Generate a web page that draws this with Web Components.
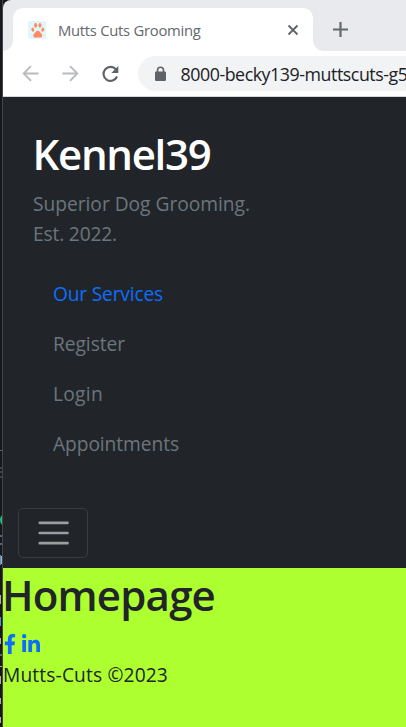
<!DOCTYPE html>
<html lang="en"><head><meta charset="utf-8"><title>Mutts Cuts Grooming</title>
<style>html,body{margin:0;height:727px;overflow:hidden;background:#17181b;font-family:"Open Sans","Noto Sans",sans-serif}</style></head>
<body><app-window></app-window>
<script>
const define=(name,html,ready)=>customElements.define(name,class extends HTMLElement{
  connectedCallback(){
    if(this.shadowRoot)return;
    const t=document.createElement('template');t.innerHTML=html;
    this.attachShadow({mode:'open'}).append(t.content.cloneNode(true));
    if(ready)ready(this);
  }
});
/* A line of text tracked to occupy the width given in its "w" attribute. */
define('tracked-text','<style>:host{display:block;width:max-content;white-space:pre}</style><span><slot></slot></span>',el=>{
  const n=el.textContent.length,w=el.getBoundingClientRect().width;
  el.style.letterSpacing=((+el.getAttribute('w')-w)/n)+'px';
});
define('paw-icon',`<style>:host{display:block;width:18px;height:20px}svg{display:block}</style>
<svg width="18" height="20" viewBox="0 0 18 20"><rect x="0" y="1" width="18" height="18" rx="2" fill="#e0f6fa"/><g fill="#ff8a5e"><ellipse cx="7.600" cy="5.300" rx="1.500" ry="2.400"/><ellipse cx="12" cy="5.300" rx="1.500" ry="2.400"/><ellipse cx="4.800" cy="9.700" rx="1.400" ry="2.100" transform="rotate(-15 4.800 9.700)"/><ellipse cx="14.800" cy="9.700" rx="1.400" ry="2.100" transform="rotate(15 14.800 9.700)"/><path d="M9.800 10.800c-1.800 0-2.300 1.700-3.600 3-1.500 1.600-.9 3.800 1 3.800h5.200c1.900 0 2.500-2.200 1-3.800-1.300-1.300-1.800-3-3.600-3z"/></g></svg>`);
define('tab-strip',`<style>:host{display:flex;height:51px;background:#e8eaed;border-radius:8px 0 0;box-sizing:border-box;padding:8px 0 0 10px;font-size:14.8px;color:#65686c}
.tab{position:relative;display:flex;align-items:center;box-sizing:border-box;width:300px;height:43px;background:#fff;border-radius:10px 10px 0 0;padding:0 14px 0 15px}
.tab:before,.tab:after{content:"";position:absolute;bottom:0;width:10px;height:10px}
.tab:before{left:-10px;background:radial-gradient(circle at 0 0,#e8eaed 9.5px,#fff 10px)}
.tab:after{right:-10px;background:radial-gradient(circle at 100% 0,#e8eaed 9.5px,#fff 10px)}
tracked-text{margin-left:12px}.x{margin-left:auto}.plus{margin:13px 0 0 19px}</style>
<div class="tab"><paw-icon></paw-icon><tracked-text w="142.5">Mutts Cuts Grooming</tracked-text><svg class="x" width="12" height="12" viewBox="0 0 12 12"><path d="M1.500 1.500l9 9m0-9l-9 9" stroke="#5f6368" stroke-width="1.800"/></svg></div>
<svg class="plus" width="17" height="17" viewBox="0 0 17 17"><path d="M8.500 1v15M1 8.500h15" stroke="#65686c" stroke-width="2.200"/></svg>`);
define('address-bar',`<style>:host{display:flex;align-items:center;box-sizing:border-box;height:46px;background:#fff;border-bottom:1px solid #d5d7da;padding-left:19px}
svg{flex:none}.fwd{margin-left:23px}.reload{margin-left:21px}.pill{display:flex;align-items:center;flex:1;margin-left:18px;min-width:0;height:35px;background:#f1f3f4;border-radius:18px 0 0 18px;overflow:hidden;padding-left:16px;font-size:17.8px;color:#202124}tracked-text{margin-left:13.500px}</style>
<svg width="17" height="17" viewBox="0 0 17 17" fill="none" stroke="#b9bbbd" stroke-width="1.900"><path d="M16.500 8.500H2M9 1.200L1.700 8.500 9 15.800"/></svg>
<svg class="fwd" width="17" height="17" viewBox="0 0 17 17" fill="none" stroke="#b9bbbd" stroke-width="1.900"><path d="M.5 8.500H15M8 1.200l7.300 7.300L8 15.800"/></svg>
<svg class="reload" width="20" height="18" viewBox="0 0 20 18"><path d="M16 4.500a7 7 0 1 0 1 7" fill="none" stroke="#5f6368" stroke-width="2.100"/><path d="M18.300 1v7h-7z" fill="#5f6368"/></svg>
<div class="pill"><svg width="13" height="16" viewBox="0 0 13 16"><path d="M3.500 6V4.200a3 3 0 0 1 6 0V6" fill="none" stroke="#5f6368" stroke-width="1.600"/><rect x="1" y="5.500" width="11" height="9.500" rx="1.300" fill="#5f6368"/></svg><tracked-text w="227">8000-becky139-muttscuts-g5</tracked-text></div>`);
define('nav-link','<style>:host{display:flex;align-items:center;height:50px;color:#6c757d}:host([active]){color:#0d6efd}</style><slot></slot>');
define('menu-toggle',`<style>:host{display:flex;align-items:center;justify-content:center;box-sizing:border-box;width:70px;height:50px;border:1px solid #393d41;border-radius:5px}</style>
<svg width="38" height="38" viewBox="0 0 30 30"><path stroke="#9b9d9f" stroke-linecap="round" stroke-width="2" d="M4.500 7h22M4.500 15h22M4.500 23h22"/></svg>`);
define('site-nav',`<style>:host{display:flex;flex-direction:column;box-sizing:border-box;height:471px;background:#212529;padding:27px 15px 10px;font-size:19.2px}
.brand{color:#fff;font-size:42px;font-weight:570;line-height:60px;margin-left:14.5px}.tag{color:#6c757d;line-height:30px;margin:5px 0 19px 15px}.links{margin-left:35px}menu-toggle{margin-top:auto}</style>
<tracked-text class="brand" w="178">Kennel39</tracked-text>
<div class="tag"><tracked-text w="217">Superior Dog Grooming.</tracked-text><tracked-text w="84">Est. 2022.</tracked-text></div>
<div class="links"><nav-link active><tracked-text w="110">Our Services</tracked-text></nav-link><nav-link><tracked-text w="72">Register</tracked-text></nav-link><nav-link><tracked-text w="50">Login</tracked-text></nav-link><nav-link><tracked-text w="126">Appointments</tracked-text></nav-link></div>
<menu-toggle></menu-toggle>`);
define('home-content',`<style>:host{display:block;flex:1;background:#adff2f;color:#212529;font-size:19.2px}.title{font-size:42px;font-weight:570;line-height:54px;margin-left:-1px}.social{display:flex;gap:6px;height:20px;margin:12px 0 0 .5px}.foot{line-height:30px;margin-top:6px}svg{display:block}</style>
<tracked-text class="title" w="213">Homepage</tracked-text>
<div class="social"><svg width="12" height="20" viewBox="0 0 320 512" preserveAspectRatio="none" fill="#0d6efd"><path d="M279 288l14-93h-89v-60c0-25 12-50 52-50h41V6s-37-6-72-6C152 0 104 44 104 124v71H23v93h81v224h100V288z"/></svg><svg width="18" height="18" viewBox="0 0 448 448" fill="#0d6efd"><path d="M100 448H7V149h93zM54 108a54 54 0 1 1 0-108 54 54 0 0 1 0 108zM448 448h-93V302c0-34-1-79-48-79-49 0-56 38-56 77v148h-93V149h89v41h1c13-24 43-48 88-48 94 0 112 62 112 142z"/></svg></div>
<tracked-text class="foot" w="165">Mutts-Cuts ©2023</tracked-text>`);
/* The sliver of the editor visible behind the browser's left edge. */
define('back-edge',`<style>:host{display:block;width:3px;height:727px;background:#17181b;border-right:1px solid #454648;box-sizing:border-box}svg{display:block}</style>
<svg width="2" height="727" viewBox="0 0 2 727"><path d="M0 450.500h2M0 468h2M0 472h2M0 477h2" stroke="#66686a"/><path d="M2 515q-4 5 0 10z" fill="#23b982"/><path d="M0 536h2M0 544h2M0 655h2" stroke="#91b8d9"/><path d="M0 555h1v10H0zM0 617h1v9H0z" fill="#419bd5"/><path d="M1 556h1v8H1zM0 595h1v9H0zM0 638h1v6H0zM0 666h2v1H0zM0 676h1v8H0zM0 698h1v6H0zM0 717h1v6H0z" fill="#b8aaa0"/></svg>`);
define('app-window',`<style>:host{display:flex;width:406px;height:727px;overflow:hidden}main{display:flex;flex-direction:column;flex:1;min-width:0}</style>
<back-edge></back-edge><main><tab-strip></tab-strip><address-bar></address-bar><site-nav></site-nav><home-content></home-content></main>`);
</script></body></html>
